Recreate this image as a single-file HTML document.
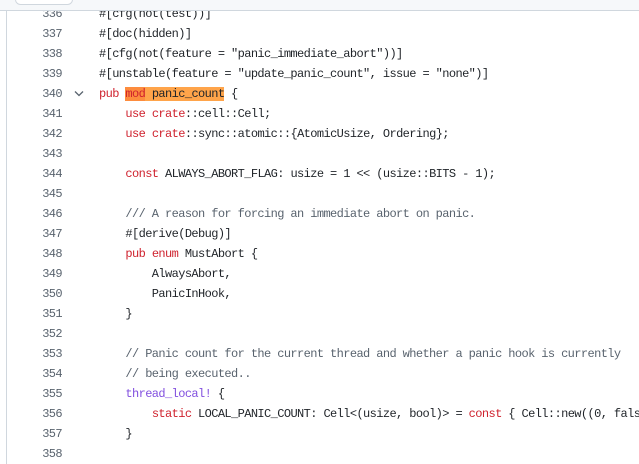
<!DOCTYPE html>
<html><head><style>
body{margin:0;width:639px;height:464px;overflow:hidden;background:#fff;position:relative;font-family:"Liberation Mono",monospace;}
.hdr{position:absolute;left:0;top:0;width:639px;height:10px;background:#f6f8fa;border-bottom:1px solid #d0d7de;z-index:2}
.btn{position:absolute;left:15px;top:-6px;width:56px;height:9px;border:1px solid #d0d7de;border-radius:6px;background:#fff}
.lb{position:absolute;left:6px;top:10px;width:1px;height:454px;background:#d0d7de;z-index:2}
.code{position:absolute;left:0;top:4px;width:639px;overflow:hidden;font-size:12px;letter-spacing:-0.6px;line-height:20px;color:#1f2328}
.l{height:20px;position:relative;white-space:pre}
.n{position:absolute;left:0;width:62px;text-align:right;color:#59636e}
.c{position:absolute;left:99px;white-space:pre}
.k{color:#cf222e}.cm{color:#59636e}.p{color:#8250df}
.chev{position:absolute;left:74px;top:6px}
.h1{background:#fd8c3e}.h2{background:#ffa44a}
</style></head><body>
<div class="hdr"><div class="btn"></div></div>
<div class="lb"></div>
<div class="code"><div class="l"><span class="n">336</span><span class="c">#[cfg(not(test))]</span></div><div class="l"><span class="n">337</span><span class="c">#[doc(hidden)]</span></div><div class="l"><span class="n">338</span><span class="c">#[cfg(not(feature = "panic_immediate_abort"))]</span></div><div class="l"><span class="n">339</span><span class="c">#[unstable(feature = "update_panic_count", issue = "none")]</span></div><div class="l"><span class="n">340</span><svg class="chev" width="10" height="7" viewBox="0 0 10 7"><path d="M1 1.5L5 5.5L9 1.5" fill="none" stroke="#59636e" stroke-width="1.3"/></svg><span class="c"><span class="k">pub</span> <span class="k h1">mod</span><span class="h2"> panic_count</span> {</span></div><div class="l"><span class="n">341</span><span class="c">    <span class="k">use</span> <span class="k">crate</span>::cell::Cell;</span></div><div class="l"><span class="n">342</span><span class="c">    <span class="k">use</span> <span class="k">crate</span>::sync::atomic::{AtomicUsize, Ordering};</span></div><div class="l"><span class="n">343</span></div><div class="l"><span class="n">344</span><span class="c">    <span class="k">const</span> ALWAYS_ABORT_FLAG: usize = 1 &lt;&lt; (usize::BITS - 1);</span></div><div class="l"><span class="n">345</span></div><div class="l"><span class="n">346</span><span class="c">    <span class="cm">/// A reason for forcing an immediate abort on panic.</span></span></div><div class="l"><span class="n">347</span><span class="c">    #[derive(Debug)]</span></div><div class="l"><span class="n">348</span><span class="c">    <span class="k">pub</span> <span class="k">enum</span> MustAbort {</span></div><div class="l"><span class="n">349</span><span class="c">        AlwaysAbort,</span></div><div class="l"><span class="n">350</span><span class="c">        PanicInHook,</span></div><div class="l"><span class="n">351</span><span class="c">    }</span></div><div class="l"><span class="n">352</span></div><div class="l"><span class="n">353</span><span class="c">    <span class="cm">// Panic count for the current thread and whether a panic hook is currently</span></span></div><div class="l"><span class="n">354</span><span class="c">    <span class="cm">// being executed..</span></span></div><div class="l"><span class="n">355</span><span class="c">    <span class="p">thread_local!</span> {</span></div><div class="l"><span class="n">356</span><span class="c">        <span class="k">static</span> LOCAL_PANIC_COUNT: Cell&lt;(usize, bool)&gt; = <span class="k">const</span> { Cell::new((0, false)) };</span></div><div class="l"><span class="n">357</span><span class="c">    }</span></div><div class="l"><span class="n">358</span></div></div>
</body></html>
